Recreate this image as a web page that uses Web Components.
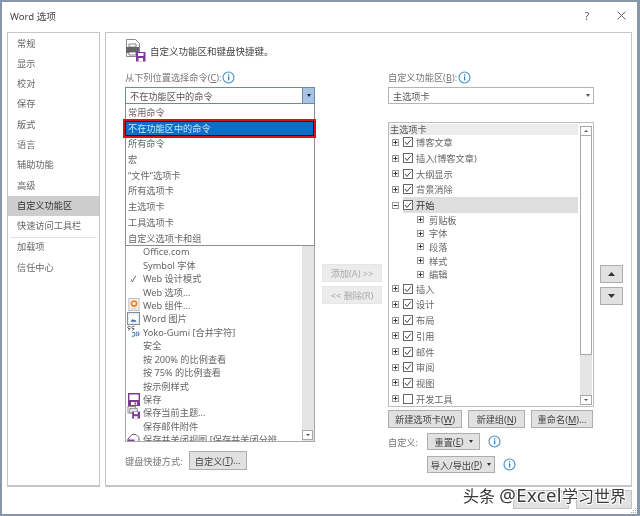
<!DOCTYPE html>
<html>
<head>
<meta charset="utf-8">
<title>Word 选项</title>
<style>
  html, body { margin: 0; padding: 0; background: #fff; }
  body { font: 9.2px "Noto Sans", "Noto Sans CJK SC", sans-serif; color: #555; }
</style>
</head>
<body>
<word-options></word-options>

<script>
const INFO = `<svg width="13" height="13" viewBox="0 0 13 13"><circle cx="6.5" cy="6.5" r="5.5" fill="#fff" stroke="#3f8fd0" stroke-width="1.1"/><rect x="6" y="5.4" width="1.3" height="4" fill="#3f7fb8"/><rect x="6" y="3.2" width="1.3" height="1.3" fill="#3f7fb8"/></svg>`;
const FLOPPY = `<svg width="12" height="13" viewBox="0 0 12 13"><path d="M.7.7h10.6v11.6H.7z" fill="#fff" stroke="#7a3a96" stroke-width="1.4"/><path d="M1 7h10v5.5H1z" fill="#7a3a96"/><path d="M3 9h6v3H3z" fill="#fff"/><path d="M6.5 9.5h1.5v2H6.5z" fill="#7a3a96"/></svg>`;

// icons in the command list, keyed by name
const ICONS = {
  gear: `<svg width="12" height="13" viewBox="0 0 12 14"><rect x=".5" y=".5" width="11" height="13" fill="#fbf3e8" stroke="#b9b9c4"/><circle cx="6" cy="6" r="2.800" fill="none" stroke="#e8812a" stroke-width="1.800"/><rect x="2.500" y="11" width="7" height="1" fill="#c9c9d4"/></svg>`,
  pic: `<svg width="13" height="13" viewBox="0 0 14 14"><rect x=".5" y=".5" width="13" height="13" fill="#e8ebf0" stroke="#7d8594"/><rect x="2.500" y="3" width="9" height="8" fill="#fff"/><path d="M3.500 10.500l2.500-3 1.500 1.500 1-1 2 2.500z" fill="#3f6ea8"/></svg>`,
  yoko: `<svg width="14" height="13" viewBox="0 0 14 13"><path d="M5 7.500a2 2 0 1 1 0 3.500" fill="none" stroke="#3f7fb8" stroke-width="1.100"/><path d="M9 7a2.500 2.500 0 0 1 0 4" fill="none" stroke="#3f7fb8" stroke-width="1.100"/><path d="M11 6.500a3 3 0 0 1 0 4.500" fill="none" stroke="#7a3a96" stroke-width="1"/><path d="M3.300 2a1.300 1.300 0 1 0-.2 1.300C3 4.200 2.400 5 1.300 5.300M7.300 2a1.300 1.300 0 1 0-.2 1.300C7 4.200 6.400 5 5.300 5.300" fill="none" stroke="#555" stroke-width="1"/></svg>`,
  save: FLOPPY,
  saveTheme: `<svg width="14" height="13" viewBox="0 0 14 14"><rect x=".5" y=".5" width="8" height="7" fill="#fff" stroke="#8a8a8a"/><rect x="2.500" y="2.500" width="8" height="5" fill="#e7e7e7" stroke="#8a8a8a"/><path d="M5 6h8.500v7.500H5z" fill="#7a3a96"/><path d="M7 6.500h4v2.500H7zM7 11h4v2.500H7z" fill="#fff"/></svg>`,
  saveClose: `<svg width="13" height="13" viewBox="0 0 13 13"><path d="M5 1.500h4l3 3V12.500H1V6z" fill="#fff" stroke="#555" stroke-width=".9"/><path d="M.5 6.500h7v6h-7z" fill="#7a3a96"/><path d="M2 8h4v1.800H2z" fill="#fff"/></svg>`
};

class TitleBar extends HTMLElement {
  constructor() {
    super();
    this.attachShadow({ mode: "open" });
    this.shadowRoot.innerHTML = `
      <style>
        :host { display: flex; align-items: center; height: 27px; padding: 0 9px 0 8px; color: #444; font-size: 9.6px; }
        span { flex: 1; }
        .help { width: 34px; margin-right: 6px; text-align: center; font-size: 10px; color: #555; }
        svg { display: block; margin: 0 2px 0 7px; }
      </style>
      <span><slot></slot></span>
      <div class="help">?</div>
      <svg width="9" height="9" viewBox="0 0 9 9"><path d="M.5.500l8 8M8.500.500l-8 8" stroke="#555" stroke-width=".9"/></svg>
    `;
  }
}
customElements.define("title-bar", TitleBar);

class NavList extends HTMLElement {
  constructor() {
    super();
    this.attachShadow({ mode: "open" });
    const items = ["常规", "显示", "校对", "保存", "版式", "语言", "辅助功能", "高级", "自定义功能区", "快速访问工具栏", "-", "加载项", "信任中心"];
    const rows = items.map(t => {
      if (t === "-") return `<div class="sep"></div>`;
      return `<div class="item${t === "自定义功能区" ? " on" : ""}">${t}</div>`;
    }).join("");
    this.shadowRoot.innerHTML = `
      <style>
        :host { display: block; width: 93px; box-sizing: border-box; border: 1px solid #c6c6c6; border-bottom-width: 2px; padding-top: .5px; flex: none; }
        .item { height: 20.3px; line-height: 20px; padding-left: 9px; color: #666; white-space: nowrap; }
        .on { background: #cdcdcd; color: #333; }
        .sep { height: 1px; margin: 1px 2px -1px 2px; background: #e2e2e2; }
      </style>
      ${rows}
    `;
  }
}
customElements.define("nav-list", NavList);

class InfoIcon extends HTMLElement {
  constructor() {
    super();
    this.attachShadow({ mode: "open" });
    this.shadowRoot.innerHTML = `<style>:host { display: inline-block; width: 13px; height: 13px; line-height: 0; flex: none; }</style>${INFO}`;
  }
}
customElements.define("info-icon", InfoIcon);

class OptButton extends HTMLElement {
  constructor() {
    super();
    this.attachShadow({ mode: "open" });
    const off = this.hasAttribute("disabled");
    this.shadowRoot.innerHTML = `
      <style>
        :host { display: flex; align-items: center; justify-content: center; gap: 5px; box-sizing: border-box; height: 18px;
                background: ${off ? "#ececec" : "#e1e1e1"}; border: 1px solid ${off ? "#e6e6e6" : "#adadad"}; color: ${off ? "#aaa" : "#444"}; white-space: nowrap; flex: none; }
        span { display: flex; align-items: center; }
        .caret { display: none; width: 0; height: 0; border: 2.500px solid transparent; border-top: 3px solid #333; border-bottom: 0; }
        :host([caret]) .caret { display: block; }
      </style>
      <span><slot></slot></span><i class="caret"></i>
    `;
  }
}
customElements.define("opt-button", OptButton);

class OptCombo extends HTMLElement {
  constructor() {
    super();
    this.attachShadow({ mode: "open" });
    this.shadowRoot.innerHTML = `
      <style>
        :host { display: block; position: relative; height: 17px; }
        .box { display: flex; align-items: center; justify-content: space-between; box-sizing: border-box; height: 17px; padding-left: 4px; border: 1px solid #b4b4b4; color: #555; }
        .arrow { display: flex; align-items: center; justify-content: center; width: 11px; height: 15px; }
        .arrow i { width: 0; height: 0; border: 2.500px solid transparent; border-top: 3px solid #555; border-bottom: 0; }
        :host([open]) .box { border-color: #6d87ad; }
        :host([open]) .arrow { background: #a9c3e6; border-left: 1px solid #6d87ad; }
        :host([open]) .arrow i { border-top-color: #222; }
      </style>
      <div class="box"><span>${this.getAttribute("value")}</span><div class="arrow"><i></i></div></div>
      <slot></slot>
    `;
  }
}
customElements.define("opt-combo", OptCombo);

class DropMenu extends HTMLElement {
  constructor() {
    super();
    this.attachShadow({ mode: "open" });
    const items = ["常用命令", "不在功能区中的命令", "所有命令", "宏", "“文件”选项卡", "所有选项卡", "主选项卡", "工具选项卡", "自定义选项卡和组"];
    const rows = items.map((t, i) => `<div class="row${i === 1 ? " sel" : ""}">${t}</div>`).join("");
    this.shadowRoot.innerHTML = `
      <style>
        :host { display: block; position: absolute; left: 0; right: 0; top: 17px; z-index: 3; box-sizing: border-box; height: 142px; padding-top: 1px; background: #fff; border: 1px solid #8d8d8d; border-top: 0; }
        .row { height: 15.700px; line-height: 15.700px; padding-left: 2px; color: #666; white-space: nowrap; }
        .sel { position: relative; color: #cfe6fb; background: #0a6fc8; }
        .sel::after { content: ""; position: absolute; left: -3px; right: -2px; top: -2px; bottom: -2px; border: 2.500px solid #d8121c; outline: 1px solid #1a1a2a; outline-offset: -3.500px; }
      </style>
      ${rows}
    `;
  }
}
customElements.define("drop-menu", DropMenu);

class CommandList extends HTMLElement {
  constructor() {
    super();
    this.attachShadow({ mode: "open" });
    const items = [
      ["", "Office.com"], ["", "Symbol 字体"], ["check", "Web 设计模式"], ["", "Web 选项..."], ["gear", "Web 组件..."],
      ["pic", "Word 图片"], ["yoko", "Yoko-Gumi [合并字符]"], ["", "安全"], ["", "按 200% 的比例查看"], ["", "按 75% 的比例查看"],
      ["", "按示例样式"], ["save", "保存"], ["saveTheme", "保存当前主题..."], ["", "保存邮件附件"], ["saveClose", "保存并关闭视图 [保存并关闭分辨"]
    ];
    const rows = items.map(([ic, t]) => {
      const icon = ic === "check" ? `<span class="tick">✓</span>` : (ICONS[ic] || "");
      return `<div class="row"><div class="ic">${icon}</div><div>${t}</div></div>`;
    }).join("");
    this.shadowRoot.innerHTML = `
      <style>
        :host { display: flex; box-sizing: border-box; height: 318px; margin-top: 20px; border: 1px solid #a8a8a8; border-top: 0; overflow: hidden; }
        .rows { flex: 1; padding-top: 120.500px; min-width: 0; overflow: hidden; }
        .row { display: flex; align-items: center; height: 13.450px; white-space: nowrap; color: #666; }
        .ic { width: 15px; margin-right: 2px; display: flex; justify-content: center; flex: none; }
        .tick { color: #333; font-size: 8px; }
        .track { position: relative; width: 12px; background: #e4e4e4; flex: none; }
        .down { position: absolute; bottom: 1px; left: 0; right: 1px; height: 10px; box-sizing: border-box; background: #fff; border: 1px solid #a8a8a8; display: flex; align-items: center; justify-content: center; }
        .down i { width: 0; height: 0; border: 2px solid transparent; border-top: 2.500px solid #444; border-bottom: 0; }
      </style>
      <div class="rows">${rows}</div>
      <div class="track"><div class="down"><i></i></div></div>
    `;
  }
}
customElements.define("command-list", CommandList);

class TreeRow extends HTMLElement {
  constructor() {
    super();
    this.attachShadow({ mode: "open" });
    const sub = this.hasAttribute("sub");
    const open = this.hasAttribute("open");
    const sign = open ? "M1.500 3.500h4" : "M1.500 3.500h4M3.500 1.500v4";
    const box = sub ? "" : `<svg class="chk" width="10" height="10" viewBox="0 0 10 10"><rect x=".5" y=".5" width="9" height="9" fill="#fff" stroke="#666"/>${this.hasAttribute("off") ? "" : `<path d="M2 5l2 2.500 4-5" fill="none" stroke="#444" stroke-width="1"/>`}</svg>`;
    this.shadowRoot.innerHTML = `
      <style>
        :host { display: flex; align-items: center; height: 15.700px; padding-left: 3px; white-space: nowrap; color: #666; }
        :host([sub]) { height: 13.600px; padding-left: 28px; }
        svg { flex: none; display: block; }
        .pick { display: flex; align-items: center; margin-left: 4px; }
        .txt { margin-left: 3px; }
        :host([sub]) .txt { margin-left: 1px; }
        :host([open]) { color: #333; }
        :host([open]) .pick { flex: 1; height: 15.700px; background: #dedede; }
      </style>
      <svg width="7" height="7" viewBox="0 0 7 7"><rect x=".5" y=".5" width="6" height="6" fill="#fff" stroke="#999"/><path d="${sign}" stroke="#333" stroke-width="1"/></svg>
      <div class="pick">${box}<div class="txt"><slot></slot></div></div>
    `;
  }
}
customElements.define("tree-row", TreeRow);

class RibbonTree extends HTMLElement {
  constructor() {
    super();
    this.attachShadow({ mode: "open" });
    this.shadowRoot.innerHTML = `
      <style>
        :host { display: flex; box-sizing: border-box; height: 285px; margin-top: 18px; border: 1px solid #bdbdbd; overflow: hidden; }
        .rows { flex: 1; min-width: 0; padding-top: .5px; }
        .head { height: 11px; line-height: 12px; padding-left: 1px; background: #ececec; color: #555; }
        .bar { display: flex; flex-direction: column; width: 12px; margin: 0 1px 0 2px; padding: 3px 0 1px; background: #fff; flex: none; }
        .btn { display: flex; align-items: center; justify-content: center; box-sizing: border-box; height: 10px; background: #fff; border: 1px solid #a8a8a8; flex: none; }
        .btn i { width: 0; height: 0; border: 2px solid transparent; }
        .up i { border-bottom: 2.500px solid #555; border-top: 0; }
        .dn i { border-top: 2.500px solid #555; border-bottom: 0; }
        .thumb { flex: 1; border: 1px solid #a8a8a8; border-top: 0; background: #fff; }
        .gutter { height: 40px; background: #e4e4e4; flex: none; }
      </style>
      <div class="rows"><div class="head">主选项卡</div><slot></slot></div>
      <div class="bar">
        <div class="btn up"><i></i></div><div class="thumb"></div><div class="gutter"></div><div class="btn dn"><i></i></div>
      </div>
    `;
  }
}
customElements.define("ribbon-tree", RibbonTree);

class WordOptions extends HTMLElement {
  constructor() {
    super();
    this.attachShadow({ mode: "open" });
    this.shadowRoot.innerHTML = `
      <style>
        :host { display: flex; flex-direction: column; position: relative; box-sizing: border-box; width: 640px; height: 516px; background: #fff; border: 2px solid #8796ab; border-right-width: 3px; filter: blur(.4px); overflow: hidden; }
        .body { display: flex; gap: 5px; height: 455px; padding: 3px 5px 0 5px; }
        .main { flex: 1; box-sizing: border-box; border: 1px solid #c6c6c6; border-bottom-width: 2px; padding: 5px 0 0 19px; }
        .head { display: flex; align-items: center; gap: 3px; height: 25px; color: #444; font-size: 9.500px; }
        .cols { display: flex; margin-top: 7px; }
        .left { width: 190px; flex: none; }
        .mid { width: 60px; margin: 0 6px 0 7px; padding-top: 194px; display: flex; flex-direction: column; gap: 4px; flex: none; }
        .right { width: 206px; flex: none; }
        .updown { width: 23px; margin-left: 6px; padding-top: 195px; display: flex; flex-direction: column; gap: 4px; flex: none; }
        .lab { display: flex; align-items: center; gap: 1px; height: 14px; margin-bottom: 3px; color: #777; }
        .kb { display: flex; align-items: center; gap: 6px; height: 19px; margin-top: 9px; color: #777; }
        .new { display: flex; justify-content: space-between; margin-top: 3px; }
        .line { display: flex; align-items: center; margin-top: 5px; }
        .line span { width: 39px; color: #777; }
        .line opt-button { height: 17px; margin-right: 8px; }
        .foot { display: flex; justify-content: flex-end; gap: 7px; padding: 3px 5px 0 0; }
        .foot div { width: 56px; height: 19px; background: #e1e1e1; border: 1px solid #c4c4c4; box-sizing: border-box; }
        .mark { position: absolute; left: 461px; top: 483px; font-size: 16px; line-height: 20px; color: #3a3a3a; white-space: nowrap; text-shadow: 0 0 1px #fff, 1px 1px 0 #fff, -1px -1px 0 #fff, 1px -1px 0 #fff, -1px 1px 0 #fff; z-index: 5; }
        .mark b { font-weight: normal; font-size: 18.500px; letter-spacing: .4px; }
        .grip { position: absolute; right: 0; bottom: 0; z-index: 4; }
      </style>
      <title-bar>Word 选项</title-bar>
      <div class="body">
        <nav-list></nav-list>
        <div class="main">
          <div class="head">
            <svg width="22" height="25" viewBox="0 0 22 25"><path d="M1.500 1.500h9l4 4v13h-13z" fill="#fff" stroke="#8a8a8a"/><path d="M1 9h13v6H1z" fill="#666"/><path d="M4 6h7v3H4zM4 14h7v3H4z" fill="#fff" stroke="#666" stroke-width=".8"/><path d="M11 14h9.500v9.500H11z" fill="#7a3a96"/><path d="M13 15h5.500v3H13zM13.500 20h4.500v3.500h-4.500z" fill="#fff"/></svg>
            <span>自定义功能区和键盘快捷键。</span>
          </div>
          <div class="cols">
            <div class="left">
              <div class="lab"><span>从下列位置选择命令(<u>C</u>):</span><info-icon></info-icon></div>
              <opt-combo open value="不在功能区中的命令"><drop-menu></drop-menu></opt-combo>
              <command-list></command-list>
              <div class="kb"><span>键盘快捷方式:</span><opt-button style="width:58px;height:19px">自定义(<u>T</u>)...</opt-button></div>
            </div>
            <div class="mid">
              <opt-button disabled>添加(A) &gt;&gt;</opt-button>
              <opt-button disabled>&lt;&lt; 删除(R)</opt-button>
            </div>
            <div class="right">
              <div class="lab"><span>自定义功能区(<u>B</u>):</span><info-icon></info-icon></div>
              <opt-combo value="主选项卡"></opt-combo>
              <ribbon-tree>
                <tree-row>博客文章</tree-row>
                <tree-row>插入(博客文章)</tree-row>
                <tree-row>大纲显示</tree-row>
                <tree-row>背景消除</tree-row>
                <tree-row open>开始</tree-row>
                <tree-row sub>剪贴板</tree-row>
                <tree-row sub>字体</tree-row>
                <tree-row sub>段落</tree-row>
                <tree-row sub>样式</tree-row>
                <tree-row sub>编辑</tree-row>
                <tree-row>插入</tree-row>
                <tree-row>设计</tree-row>
                <tree-row>布局</tree-row>
                <tree-row>引用</tree-row>
                <tree-row>邮件</tree-row>
                <tree-row>审阅</tree-row>
                <tree-row>视图</tree-row>
                <tree-row off>开发工具</tree-row>
              </ribbon-tree>
              <div class="new">
                <opt-button style="width:74px">新建选项卡(<u>W</u>)</opt-button>
                <opt-button style="width:57px">新建组(<u>N</u>)</opt-button>
                <opt-button style="width:62px;margin-right:1px">重命名(<u>M</u>)...</opt-button>
              </div>
              <div class="line"><span>自定义:</span><opt-button caret style="width:53px">重置(<u>E</u>)</opt-button><info-icon></info-icon></div>
              <div class="line" style="margin-top:6px"><span></span><opt-button caret style="width:68px">导入/导出(<u>P</u>)</opt-button><info-icon></info-icon></div>
            </div>
            <div class="updown">
              <opt-button><svg width="7" height="4" viewBox="0 0 7 4"><path d="M3.500 0l3.500 4H0z" fill="#333"/></svg></opt-button>
              <opt-button><svg width="7" height="4" viewBox="0 0 7 4"><path d="M0 0h7L3.500 4z" fill="#333"/></svg></opt-button>
            </div>
          </div>
        </div>
      </div>
      <div class="foot"><div></div><div></div></div>
      <div class="mark">头条 <b>@Excel</b>学习世界</div>
      <svg class="grip" width="6" height="6" viewBox="0 0 6 6"><path d="M4 0h1v1H4zM2 2h1v1H2zM4 2h1v1H4zM0 4h1v1H0zM2 4h1v1H2zM4 4h1v1H4z" fill="#a0a0a0"/></svg>
    `;
  }
}
customElements.define("word-options", WordOptions);
</script>
</body>
</html>
